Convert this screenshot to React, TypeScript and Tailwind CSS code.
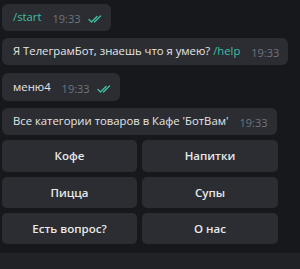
import React from "react";

const font = { fontFamily: "'Open Sans', 'Noto Sans', sans-serif" };

function Checks() {
  return (
    <svg width="16" height="8" viewBox="0 0 16 8" fill="none" className="ml-[7px] mt-[3px]">
      <path d="M1 4.5 L3.5 7 L9 1.5" stroke="#3fbfa4" strokeWidth="1.4" strokeLinecap="round" strokeLinejoin="round" />
      <path d="M6.5 7 L12.5 1" stroke="#3fbfa4" strokeWidth="1.4" strokeLinecap="round" />
    </svg>
  );
}

function Bubble({ children, time, read, className }: { children: React.ReactNode; time: string; read?: boolean; className?: string }) {
  return (
    <div className={`flex items-center self-start whitespace-nowrap rounded-[6px] bg-[#2b2d32] pl-[11px] ${read ? "pr-[7px]" : "pr-[9px]"} ${className ?? ""}`}>
      <span className="text-[11.3px] text-[#e6e6e6]">{children}</span>
      <span className="ml-[11px] mt-[4px] text-[11px] text-[#6f767e]">{time}</span>
      {read && <Checks />}
    </div>
  );
}

const buttons = ["Кофе", "Напитки", "Пицца", "Супы", "Есть вопрос?", "О нас"];

export default function App() {
  return (
    <div className="w-[300px] h-[269px] bg-[#17181b] flex flex-col overflow-hidden" style={font}>
      <div className="flex flex-col pl-[2px] pt-[4px]">
        <Bubble time="19:33" read className="h-[27px]">
          <span className="text-[#3fbfa4]">/start</span>
        </Bubble>
        <Bubble time="19:33" className="h-[27px] mt-[7px]">
          Я ТелеграмБот, знаешь что я умею? <span className="text-[#3fbfa4]">/help</span>
        </Bubble>
        <Bubble time="19:33" read className="h-[28px] mt-[8px]">
          меню4
        </Bubble>
        <Bubble time="19:33" className="h-[27px] mt-[7px]">
          Все категории товаров в Кафе 'БотВам'
        </Bubble>
        <div className="mt-[5px] grid w-[276px] grid-cols-[135px_136px] gap-x-[5px] gap-y-[5px]">
          {buttons.map((b, i) => (
            <div
              key={b}
              className={`flex items-center justify-center rounded-[5px] bg-[#2b2d32] text-[11.5px] font-semibold text-[#e8e8e8] ${i < 2 ? "h-[32px]" : "h-[31px]"}`}
            >
              {b}
            </div>
          ))}
        </div>
      </div>
      <div className="mt-auto h-[16px] bg-[#212226]" />
    </div>
  );
}
